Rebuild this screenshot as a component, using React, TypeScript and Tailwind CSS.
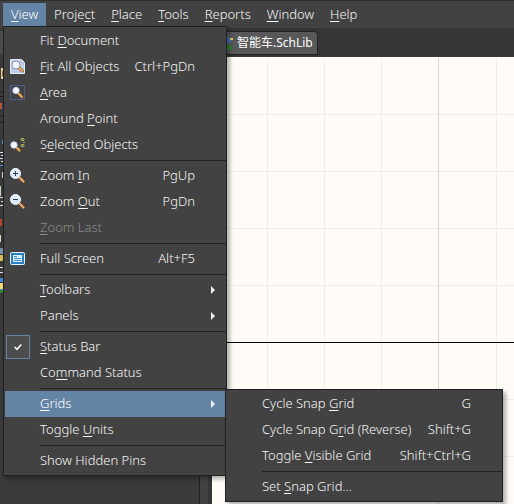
import React, { ReactNode } from "react";

type Item = {
  label?: string;
  at?: number;
  keys?: string;
  icon?: ReactNode;
  arrow?: boolean;
  disabled?: boolean;
  active?: boolean;
  checked?: boolean;
  line?: boolean;
};

function Label({ text, at = -1 }: { text: string; at?: number }) {
  if (at < 0) return <span>{text}</span>;
  return (
    <span className="whitespace-pre">
      {text.slice(0, at)}
      <span className="underline decoration-1 underline-offset-2">{text[at]}</span>
      {text.slice(at + 1)}
    </span>
  );
}

function Handle({ d }: { d: string }) {
  return (
    <g strokeLinecap="round">
      <path d={d} stroke="#8a5a2c" strokeWidth="3" />
      <path d={d} stroke="#eaae66" strokeWidth="1.8" />
    </g>
  );
}

const Svg = ({ children }: { children: ReactNode }) => (
  <svg viewBox="0 0 16 16" className="size-4" fill="none" aria-hidden="true">
    {children}
  </svg>
);

const pageIcon = (
  <Svg>
    <path d="M.5 .5H11.5L14.5 3.5V14.5H.5Z" fill="#bccbe8" stroke="#e3eaf8" />
    <path d="M11.5 .5V3.5H14.5" fill="#fff" stroke="#7e93bd" strokeWidth=".6" />
    <Handle d="M9.5 9.5L12.5 12" />
    <circle cx="6" cy="6" r="4" fill="#f6f9ff" stroke="#8b96ab" />
  </Svg>
);
const areaIcon = (
  <Svg>
    <rect x=".5" y=".5" width="14" height="14" stroke="#5868b0" strokeDasharray="2 1" />
    <Handle d="M9 9L12 12" />
    <circle cx="6" cy="5.5" r="3.2" fill="#f6f9ff" stroke="#b9cdea" />
  </Svg>
);
const selectedIcon = (
  <Svg>
    <Handle d="M7 11L9.5 13.5" />
    <circle cx="4" cy="8" r="3.2" fill="#f6f9ff" stroke="#c3d6ee" />
    <path
      d="M12.5 1L14 2.5L12.5 4L11 2.5ZM12.5 7L14 8.5L12.5 10L11 8.5ZM13.5 5.5h1"
      fill="#4a4826"
      stroke="#f4ef7c"
    />
  </Svg>
);
const zoomIcon = (plus: boolean) => (
  <Svg>
    <Handle d="M10 10L13.5 13.5" />
    <circle cx="5.5" cy="5.5" r="5" fill="#dceafb" stroke="#f8fbff" />
    <path d="M3 5.5H8" stroke="#333c4a" />
    {plus && <path d="M5.5 3V8" stroke="#333c4a" />}
  </Svg>
);
const screenIcon = (
  <Svg>
    <rect x=".5" y="1.5" width="14" height="12" rx="1" fill="#2a7fc0" stroke="#e4f2fc" />
    <rect x="3" y="4" width="9" height="7" fill="#d8effc" />
    <path d="M4 5.5H7M4 7.5H11M4 9.5H11" stroke="#3f93cd" />
  </Svg>
);

const viewItems: Item[] = [
  { label: "Fit Document", at: 4 },
  { label: "Fit All Objects", at: 0, keys: "Ctrl+PgDn", icon: pageIcon },
  { label: "Area", at: 0, icon: areaIcon },
  { label: "Around Point", at: 7 },
  { label: "Selected Objects", at: 1, icon: selectedIcon },
  { line: true },
  { label: "Zoom In", at: 5, keys: "PgUp", icon: zoomIcon(true) },
  { label: "Zoom Out", at: 5, keys: "PgDn", icon: zoomIcon(false) },
  { label: "Zoom Last", at: 0, disabled: true },
  { line: true },
  { label: "Full Screen", keys: "Alt+F5", icon: screenIcon },
  { line: true },
  { label: "Toolbars", at: 0, arrow: true },
  { label: "Panels", arrow: true },
  { line: true },
  { label: "Status Bar", at: 0, checked: true },
  { label: "Command Status", at: 2 },
  { line: true },
  { label: "Grids", at: 0, arrow: true, active: true },
  { label: "Toggle Units", at: 7 },
  { line: true },
  { label: "Show Hidden Pins" },
];

const gridItems: Item[] = [
  { label: "Cycle Snap Grid", at: 11, keys: "G" },
  { label: "Cycle Snap Grid (Reverse)", at: 12, keys: "Shift+G" },
  { label: "Toggle Visible Grid", at: 7, keys: "Shift+Ctrl+G" },
  { line: true },
  { label: "Set Snap Grid...", at: 4 },
];

function Menu({ items, className }: { items: Item[]; className: string }) {
  return (
    <div
      role="menu"
      className={`absolute flex flex-col border border-[#202020] bg-[#424242] py-px shadow-[3px_3px_4px_rgba(0,0,0,0.3)] ${className}`}
    >
      {items.map((it, i) =>
        it.line ? (
          <div key={i} role="separator" className="ml-9 py-0.5">
            <div className="h-px bg-[#222222]" />
          </div>
        ) : (
          <button
            key={i}
            role="menuitem"
            disabled={it.disabled}
            className={`mx-px flex h-[26px] items-center pr-[30px] text-left ${
              it.active ? "bg-[#6384a4] text-white" : it.disabled ? "text-[#8c8c8c]" : "text-[#f6f6f6]"
            }`}
          >
            <span className="flex w-[35px] shrink-0 items-center">
              {it.checked ? (
                <span className="ml-px flex size-6 items-center justify-center border border-[#6384a4] bg-[#4d4d4d]">
                  <svg viewBox="0 0 8 8" className="size-2" fill="none" aria-hidden="true">
                    <path d="M.7 4L3 6.3L7.3 1.5" stroke="#fff" strokeWidth="1.5" />
                  </svg>
                </span>
              ) : (
                <span className="ml-[5px]">{it.icon}</span>
              )}
            </span>
            <Label text={it.label!} at={it.at} />
            <span className="ml-auto">{it.keys}</span>
            {it.arrow && (
              <svg viewBox="0 0 4 8" className="-mr-5 h-2 w-1" aria-hidden="true">
                <path d="M0 0L4 4L0 8Z" fill="#f0f0f0" />
              </svg>
            )}
          </button>
        )
      )}
    </div>
  );
}

const bar: [string, number][] = [
  ["View", 0],
  ["Project", 5],
  ["Place", 0],
  ["Tools", 0],
  ["Reports", 0],
  ["Window", 0],
  ["Help", 0],
];

export default function App() {
  return (
    <div className="relative flex h-screen flex-col overflow-hidden bg-[#353535] font-['Noto_Sans','Noto_Sans_CJK_SC',sans-serif] text-[13px] font-light text-[#f6f6f6]">
      <nav className="flex h-7 shrink-0 border-t border-[#303030] bg-[#424242] pt-0.5 pl-[3px]">
        {bar.map(([name, at], i) => (
          <button key={name} className={`h-[23px] px-2 ${i === 0 ? "bg-[#6384a4] text-white" : ""}`}>
            <Label text={name} at={at} />
          </button>
        ))}
      </nav>
      <div className="flex min-h-0 flex-1">
        <aside className="w-[200px] shrink-0 border-r border-[#222222] bg-[#3a3a3a]">
          <svg className="h-[270px] w-1" fill="none" aria-hidden="true">
            <path d="M0 3H4V26H0Z" fill="#4d4d4d" />
            <path d="M1 40H4V51H1Z" fill="#e8cf98" />
            <path d="M2 43H4V48H2Z" fill="#8a6a30" />
            <path d="M0 63.5H4M0 68.5H4M0 88.5H4M0 94.5H4" stroke="#222222" />
            <path d="M0 75H2V81H0Z" fill="#b5583a" />
            <path d="M2 77H4V82H2Z" fill="#27418f" />
            <path d="M2 112H4V116H2Z" fill="#3e8fd0" />
            <path d="M0 124.5H3M1 127.5H4M0 130.5H3M1 133.5H4M0 169.5H3M1 173.5H4M0 177.5H3" stroke="#d8dce6" />
            <path d="M0 137.5H4M0 261.5H4" stroke="#5b83bd" />
            <path d="M2.5 144V150M.5 158V168M.5 207V214" stroke="#c9dcbd" />
            <path d="M0 191H2V198H0Z" fill="#b04530" />
            <path d="M0 220H4V226H0Z" fill="#7790a5" />
            <path d="M0 227H3V233H0Z" fill="#d9bd52" />
            <path d="M0 239.5H3M0 244.5H4" stroke="#e6e6e6" />
            <path d="M0 250H4V254H0Z" fill="#3f86d8" />
            <path d="M0 255H3V261H0Z" fill="#f1d878" />
            <path d="M0 262H4V265H0Z" fill="#2f8a32" />
          </svg>
        </aside>
        <div className="w-2 shrink-0 bg-[#424242]" />
        <main className="flex min-w-0 flex-1 flex-col pl-1">
          <div className="flex h-[29px] shrink-0 items-end border-b border-[#403838] pb-px pl-1">
            <button className="flex h-6 items-center gap-1 rounded-t-sm border border-[#222222] bg-[#585858] pr-1 pl-1 text-xs font-normal text-white">
              <svg viewBox="0 0 12 14" className="h-3.5 w-3" fill="none" aria-hidden="true">
                <path d="M1 4L6 0L11 4L7 8Z" fill="#3d74c4" />
                <path d="M9 3H12" stroke="#e6c65c" strokeWidth="2" />
                <path d="M5 9H11V14H5Z" fill="#2f7a35" />
              </svg>
              智能车.SchLib
            </button>
          </div>
          <svg className="min-h-0 w-full flex-1 bg-[#fffcf7]" aria-hidden="true">
            <path
              d="M55.5 1V460M112.5 1V460M169.5 1V460M284.5 1V460M0 57.5H400M0 114.5H400M0 171.5H400M0 228.5H400M0 342.5H400M0 399.5H400"
              stroke="#eeeeea"
            />
            <path d="M226.5 1V460" stroke="#d5d5d1" />
            <path d="M0 285.5H400" stroke="#000" />
          </svg>
        </main>
      </div>
      <Menu items={viewItems} className="top-[26px] left-[3px] w-[224px]" />
      <Menu items={gridItems} className="top-[389px] left-[225px] w-[278px]" />
    </div>
  );
}
